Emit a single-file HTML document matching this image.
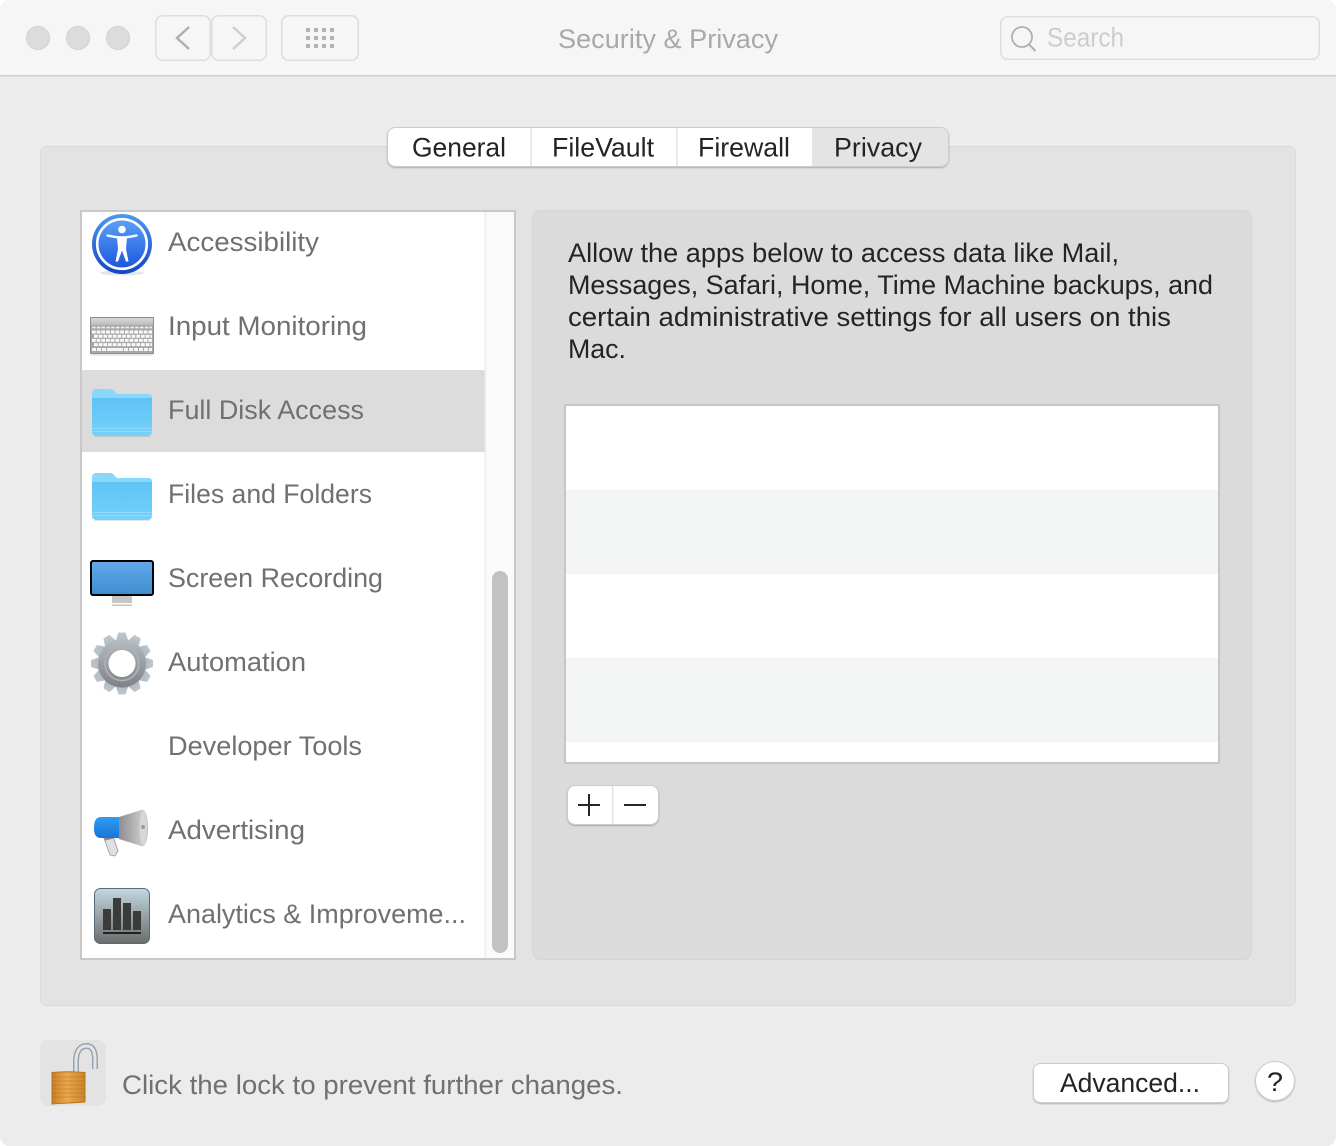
<!DOCTYPE html>
<html><head><meta charset="utf-8"><title>Security &amp; Privacy</title>
<style>
html,body{margin:0;padding:0;background:#fff;width:1336px;height:1146px;overflow:hidden}
svg{display:block}
text{font-family:"Liberation Sans",Arial,sans-serif;font-size:27px}
.r{fill:#707070}.d{fill:#242424}
</style></head><body>
<svg width="1336" height="1146" viewBox="0 0 1336 1146" xmlns="http://www.w3.org/2000/svg">
<defs>
<linearGradient id="folder" x1="0" y1="0" x2="0" y2="1"><stop offset="0" stop-color="#5ec3f5"/><stop offset="1" stop-color="#74d1fb"/></linearGradient>
<linearGradient id="screen" x1="0" y1="0" x2="0" y2="1"><stop offset="0" stop-color="#62a9ea"/><stop offset="1" stop-color="#3e8ccf"/></linearGradient>
<linearGradient id="acc" x1="0" y1="0" x2="0" y2="1"><stop offset="0" stop-color="#5aa2f8"/><stop offset="1" stop-color="#1c56dc"/></linearGradient>
<linearGradient id="acco" x1="0" y1="0" x2="0" y2="1"><stop offset="0" stop-color="#4f97ee"/><stop offset="1" stop-color="#1544c8"/></linearGradient>
<linearGradient id="gear" gradientUnits="userSpaceOnUse" x1="0" y1="632" x2="0" y2="695"><stop offset="0" stop-color="#bcc6cc"/><stop offset="1" stop-color="#77787c"/></linearGradient>
<linearGradient id="gearT" gradientUnits="userSpaceOnUse" x1="0" y1="-31" x2="0" y2="32"><stop offset="0" stop-color="#bcc6cc"/><stop offset="1" stop-color="#77787c"/></linearGradient>
<linearGradient id="ana" x1="0" y1="0" x2="0" y2="1"><stop offset="0" stop-color="#c3d8e0"/><stop offset="1" stop-color="#6b6c6c"/></linearGradient>
<linearGradient id="mega" x1="0" y1="0" x2="1" y2="0"><stop offset="0" stop-color="#8f8f8f"/><stop offset=".75" stop-color="#c6c6c6"/><stop offset="1" stop-color="#a8a8a8"/></linearGradient>
<linearGradient id="megab" x1="0" y1="0" x2="0" y2="1"><stop offset="0" stop-color="#2e9cf2"/><stop offset="1" stop-color="#1a74d8"/></linearGradient>
<linearGradient id="lock" x1="0" y1="0" x2="1" y2="0"><stop offset="0" stop-color="#c97f28"/><stop offset=".45" stop-color="#eaa94a"/><stop offset="1" stop-color="#c9852c"/></linearGradient>
<linearGradient id="keytop" x1="0" y1="0" x2="0" y2="1"><stop offset="0" stop-color="#d8d8d8"/><stop offset="1" stop-color="#bcbcbc"/></linearGradient>
<filter id="sh" x="-10%" y="-20%" width="120%" height="150%"><feDropShadow dx="0" dy="1" stdDeviation="0.8" flood-color="#000" flood-opacity=".25"/></filter>
<g id="fold">
<path d="M92 393a4 4 0 0 1 4-4h14a5 5 0 0 1 4 2l3 3h32a3 3 0 0 1 3 3v8H92z" fill="#8bd6fb"/>
<path d="M92 398h60v34a4 4 0 0 1-4 4H96a4 4 0 0 1-4-4z" fill="url(#folder)"/>
<path d="M92 428.500h60M92 431.500h60" stroke="#92d9fb" stroke-width="1"/>
<path d="M94 436.500h56" stroke="#000" stroke-opacity=".1" stroke-width="1"/>
</g>
</defs>

<!-- window -->
<rect x="0" y="0" width="1336" height="1146" rx="10" fill="#ececec"/>
<path d="M0 75V10A10 10 0 0 1 10 0H1326a10 10 0 0 1 10 10V75z" fill="#f6f6f6"/>
<rect x="0" y="75" width="1336" height="1.500" fill="#cfcfcf"/>

<!-- traffic lights -->
<g fill="#dcdcdc" stroke="#d2d2d2" stroke-width="1"><circle cx="38" cy="38" r="11.500"/><circle cx="78" cy="38" r="11.500"/><circle cx="118" cy="38" r="11.500"/></g>

<!-- toolbar buttons -->
<g fill="#f6f6f6" stroke="#dedede" stroke-width="1.500">
<rect x="155.750" y="15.750" width="54.500" height="44.500" rx="7"/>
<rect x="211.750" y="15.750" width="54.500" height="44.500" rx="7"/>
<rect x="281.750" y="15.750" width="76.500" height="44.500" rx="7"/>
<rect x="1000.750" y="16.750" width="318.500" height="42.500" rx="7"/>
</g>
<path d="M189 27L177 38L189 49" fill="none" stroke="#b0b0b0" stroke-width="2.500"/>
<path d="M233 27L245 38L233 49" fill="none" stroke="#cfcfcf" stroke-width="2.500"/>
<g fill="#b4b4b4">
<rect x="306" y="28" width="4" height="4"/><rect x="314" y="28" width="4" height="4"/><rect x="322" y="28" width="4" height="4"/><rect x="330" y="28" width="4" height="4"/>
<rect x="306" y="36" width="4" height="4"/><rect x="314" y="36" width="4" height="4"/><rect x="322" y="36" width="4" height="4"/><rect x="330" y="36" width="4" height="4"/>
<rect x="306" y="44" width="4" height="4"/><rect x="314" y="44" width="4" height="4"/><rect x="322" y="44" width="4" height="4"/><rect x="330" y="44" width="4" height="4"/>
</g>
<text x="558" y="48" textLength="220" lengthAdjust="spacingAndGlyphs" fill="#a9a9a9">Security &amp; Privacy</text>
<circle cx="1022" cy="37" r="10" fill="none" stroke="#b0b0b0" stroke-width="1.800"/>
<path d="M1029 44.500L1035.500 51" stroke="#b0b0b0" stroke-width="2"/>
<text x="1047" y="46.500" textLength="77" lengthAdjust="spacingAndGlyphs" fill="#cdcdcd">Search</text>

<!-- main panel -->
<rect x="40.500" y="146.500" width="1255" height="859" rx="6" fill="#e3e3e3" stroke="#dbdbdb"/>

<!-- tabs -->
<rect x="387.500" y="127.500" width="561" height="39" rx="8" fill="#fff" stroke="#cccccc" stroke-width="1" filter="url(#sh)"/>
<path d="M812 128H940a8 8 0 0 1 8 8v22a8 8 0 0 1-8 8H812z" fill="#e4e4e4"/>
<path d="M531 128v38M677 128v38" stroke="#e2e2e2" stroke-width="1.500"/>
<text class="d" x="412" y="156.500" textLength="94" lengthAdjust="spacingAndGlyphs">General</text>
<text class="d" x="552" y="156.500" textLength="102" lengthAdjust="spacingAndGlyphs">FileVault</text>
<text class="d" x="698" y="156.500" textLength="92" lengthAdjust="spacingAndGlyphs">Firewall</text>
<text class="d" x="834" y="156.500" textLength="88" lengthAdjust="spacingAndGlyphs">Privacy</text>

<!-- sidebar -->
<rect x="81" y="211" width="434" height="748" fill="#fff" stroke="#c8c8c8" stroke-width="2"/>
<rect x="82" y="370" width="403" height="82" fill="#dcdcdc"/>
<rect x="485" y="212" width="29" height="746" fill="#fafafa"/>
<rect x="484.500" y="212" width="1.500" height="746" fill="#ececec"/>
<rect x="492" y="571" width="16" height="382" rx="8" fill="#c2c2c2"/>

<text class="r" x="168" y="251" textLength="151" lengthAdjust="spacingAndGlyphs">Accessibility</text>
<text class="r" x="168" y="335" textLength="199" lengthAdjust="spacingAndGlyphs">Input Monitoring</text>
<text class="r" x="168" y="419" textLength="196" lengthAdjust="spacingAndGlyphs">Full Disk Access</text>
<text class="r" x="168" y="503" textLength="204" lengthAdjust="spacingAndGlyphs">Files and Folders</text>
<text class="r" x="168" y="587" textLength="215" lengthAdjust="spacingAndGlyphs">Screen Recording</text>
<text class="r" x="168" y="671" textLength="138" lengthAdjust="spacingAndGlyphs">Automation</text>
<text class="r" x="168" y="755" textLength="194" lengthAdjust="spacingAndGlyphs">Developer Tools</text>
<text class="r" x="168" y="839" textLength="137" lengthAdjust="spacingAndGlyphs">Advertising</text>
<text class="r" x="168" y="923" textLength="298" lengthAdjust="spacingAndGlyphs">Analytics &amp; Improveme...</text>

<!-- accessibility icon -->
<ellipse cx="122" cy="273" rx="22" ry="2.500" fill="#000" opacity=".1"/>
<circle cx="122" cy="244" r="30" fill="url(#acco)"/>
<circle cx="122" cy="244" r="24.800" fill="url(#acc)" stroke="#fff" stroke-width="2.600"/>
<circle cx="122" cy="229.500" r="3.800" fill="#fff"/>
<path d="M107.500 235.500C112 236.500 116 237.500 122 237.500C128 237.500 132 236.500 136.500 235.500" fill="none" stroke="#fff" stroke-width="2.400" stroke-linecap="round"/>
<path d="M117 237L118 249L115.500 261.500H118L122 250.500L126 261.500H128.500L126 249L127 237z" fill="#fff"/>

<!-- keyboard icon -->
<rect x="90.500" y="317.500" width="63" height="36" fill="#a8a8a8" stroke="#8e8e8e" stroke-width="1"/>
<rect x="91" y="318" width="62" height="7" fill="url(#keytop)"/>
<g fill="none" stroke="#fafafa" stroke-width="3" stroke-dasharray="3.700 1">
<path d="M92 332H152M94 336.200H152M92 340.400H152M94 344.600H152"/>
</g>
<path d="M92 327.500H152" stroke="#eeeeee" stroke-width="1.800" stroke-dasharray="3.500 1.300"/>
<path d="M92 349.500H152" stroke="#f5f5f5" stroke-width="3" stroke-dasharray="4 1 4 1 4 1 16 1 4 1 4 1 4 1"/>
<rect x="91" y="354" width="62" height="2" fill="#000" opacity=".09"/>

<!-- folders -->
<use href="#fold"/>
<use href="#fold" y="84"/>

<!-- monitor -->
<rect x="112" y="596" width="20" height="7" fill="#c6c6c6"/>
<rect x="112" y="603" width="20" height="1.500" fill="#fff"/>
<rect x="112" y="604.500" width="20" height="1.500" fill="#c2c2c2"/>
<rect x="91" y="561" width="62" height="34" rx="2" fill="url(#screen)" stroke="#000" stroke-width="2"/>

<!-- gear -->
<g fill="url(#gearT)" transform="translate(122 663.500)">
<path d="M-3.500 -31h7l3 9h-13z"/>
<path d="M-3.500 -31h7l3 9h-13z" transform="rotate(30)"/><path d="M-3.500 -31h7l3 9h-13z" transform="rotate(60)"/><path d="M-3.500 -31h7l3 9h-13z" transform="rotate(90)"/><path d="M-3.500 -31h7l3 9h-13z" transform="rotate(120)"/><path d="M-3.500 -31h7l3 9h-13z" transform="rotate(150)"/><path d="M-3.500 -31h7l3 9h-13z" transform="rotate(180)"/><path d="M-3.500 -31h7l3 9h-13z" transform="rotate(210)"/><path d="M-3.500 -31h7l3 9h-13z" transform="rotate(240)"/><path d="M-3.500 -31h7l3 9h-13z" transform="rotate(270)"/><path d="M-3.500 -31h7l3 9h-13z" transform="rotate(300)"/><path d="M-3.500 -31h7l3 9h-13z" transform="rotate(330)"/>
</g>
<circle cx="122" cy="663.500" r="24" fill="url(#gear)"/>
<circle cx="122" cy="663.500" r="17" fill="none" stroke="#b0b2b6" stroke-width="1.500"/>
<circle cx="122" cy="663.500" r="13.500" fill="#fff"/>

<!-- megaphone -->
<path d="M104 838L113 836L118 851L115 856L110 855z" fill="#e0e0e0" stroke="#a6a6a6" stroke-width="1"/>
<path d="M103.500 836l9.500-2 1 4.500-9 2z" fill="#8a8a8a"/>
<path d="M119 817L141 810C146 808 148 818 148 828C148 838 146 848 141 846L119 839z" fill="url(#mega)"/>
<ellipse cx="143.500" cy="828" rx="4" ry="18" fill="#d6d6d6"/>
<circle cx="143" cy="827" r="2" fill="#9a9a9a"/>
<path d="M119 817H101C95 817 94 823 94 828C94 833 95 838 101 838H119z" fill="url(#megab)"/>

<!-- analytics -->
<rect x="94.500" y="888.500" width="55" height="55" rx="6" fill="url(#ana)" stroke="#5a6a74"/>
<g fill="#3b3b3b"><rect x="103" y="909" width="8" height="21"/><rect x="113" y="898" width="8" height="32"/><rect x="123" y="903" width="8" height="27"/><rect x="133" y="911" width="8" height="19"/></g>
<rect x="103" y="932" width="38" height="2" fill="#222"/>

<!-- right panel -->
<rect x="532.500" y="210.500" width="719" height="749" rx="8" fill="#dbdbdb" stroke="#d5d5d5"/>
<text class="d" x="568" y="262" textLength="551" lengthAdjust="spacingAndGlyphs">Allow the apps below to access data like Mail,</text>
<text class="d" x="568" y="294" textLength="645" lengthAdjust="spacingAndGlyphs">Messages, Safari, Home, Time Machine backups, and</text>
<text class="d" x="568" y="326" textLength="603" lengthAdjust="spacingAndGlyphs">certain administrative settings for all users on this</text>
<text class="d" x="568" y="358" textLength="58" lengthAdjust="spacingAndGlyphs">Mac.</text>

<!-- table -->
<rect x="565" y="405" width="654" height="358" fill="#fff" stroke="#c7c7c7" stroke-width="2"/>
<rect x="566" y="490" width="652" height="84" fill="#f4f5f5"/>
<rect x="566" y="658" width="652" height="84" fill="#f4f5f5"/>

<!-- plus minus -->
<rect x="567.500" y="785.500" width="91" height="39" rx="8" fill="#fff" stroke="#cccccc" stroke-width="1" filter="url(#sh)"/>
<rect x="612" y="786" width="1.500" height="38" fill="#e2e2e2"/>
<path d="M578 805H600M589 794V816M624 805H646" stroke="#262626" stroke-width="2" fill="none"/>

<!-- lock -->
<rect x="40" y="1040" width="66" height="66" rx="8" fill="#e3e3e3"/>
<path d="M76 1073V1062C76 1050 81 1046 86.500 1046C92 1046 95 1050 95 1060V1069" fill="none" stroke="#98a3ac" stroke-width="6"/>
<path d="M76 1073V1062C76 1050 81 1046 86.500 1046C92 1046 95 1050 95 1060V1069" fill="none" stroke="#e2e6ea" stroke-width="3"/>
<path d="M52 1072.500C62 1071.500 74 1071.500 85 1072.500V1102C74 1103 62 1103 52 1104z" fill="url(#lock)" stroke="#b8741f" stroke-width="1"/>
<path d="M52 1077H85M52 1081H85M52 1085H85M52 1089H85M52 1093H85M52 1097H85" stroke="#a8681a" stroke-opacity=".4" stroke-width="1"/>
<text class="r" x="122" y="1094" textLength="501" lengthAdjust="spacingAndGlyphs">Click the lock to prevent further changes.</text>

<!-- advanced -->
<rect x="1033.500" y="1063.500" width="195" height="39" rx="7" fill="#fff" stroke="#cccccc" stroke-width="1" filter="url(#sh)"/>
<text class="d" x="1060" y="1092" textLength="140" lengthAdjust="spacingAndGlyphs">Advanced...</text>
<circle cx="1275" cy="1081" r="19.500" fill="#fff" stroke="#cccccc" stroke-width="1" filter="url(#sh)"/>
<text class="d" x="1267" y="1091" textLength="16" lengthAdjust="spacingAndGlyphs">?</text>
</svg>
</body></html>
